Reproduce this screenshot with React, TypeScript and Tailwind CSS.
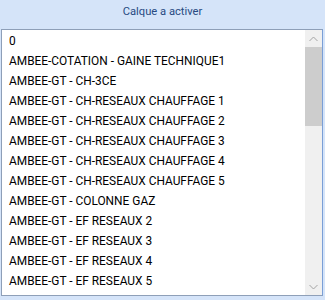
import React from "react";

const items = [
  "0",
  "AMBEE-COTATION - GAINE TECHNIQUE1",
  "AMBEE-GT - CH-3CE",
  "AMBEE-GT - CH-RESEAUX CHAUFFAGE 1",
  "AMBEE-GT - CH-RESEAUX CHAUFFAGE 2",
  "AMBEE-GT - CH-RESEAUX CHAUFFAGE 3",
  "AMBEE-GT - CH-RESEAUX CHAUFFAGE 4",
  "AMBEE-GT - CH-RESEAUX CHAUFFAGE 5",
  "AMBEE-GT - COLONNE GAZ",
  "AMBEE-GT - EF RESEAUX 2",
  "AMBEE-GT - EF RESEAUX 3",
  "AMBEE-GT - EF RESEAUX 4",
  "AMBEE-GT - EF RESEAUX 5",
];

export default function App() {
  return (
    <div
      className="w-[325px] h-[300px] bg-[#d5e4f9] flex flex-col overflow-hidden"
      style={{ fontFamily: 'Roboto, "Open Sans", sans-serif' }}
    >
      <div className="h-[29px] pb-[4px] flex items-center justify-center text-[11.2px] text-[#284a82]">
        Calque a activer
      </div>
      <div className="ml-[1px] mr-[2px] h-[267px] bg-white border border-[#8e9fb8] border-r-[#7b9fd6] flex">
        <div className="flex-1 pt-[2px] overflow-hidden">
          {items.map((t) => (
            <div key={t} className="h-[20px] pl-[7px] flex items-center text-[11.9px] text-black whitespace-nowrap">
              {t}
            </div>
          ))}
        </div>
        <div className="w-[17px] bg-[#f0f0f0] flex flex-col">
          <div className="h-[17px] flex items-center justify-center">
            <svg width="9" height="6" viewBox="0 0 9 6">
              <path d="M0.5 5 L4.5 1 L8.5 5" fill="none" stroke="#a3a3a3" strokeWidth="1" />
            </svg>
          </div>
          <div className="h-[79px] bg-[#cdcdcd]" />
          <div className="flex-1" />
          <div className="h-[17px] flex items-center justify-center">
            <svg width="9" height="6" viewBox="0 0 9 6">
              <path d="M0.5 1 L4.5 5 L8.5 1" fill="none" stroke="#a3a3a3" strokeWidth="1" />
            </svg>
          </div>
        </div>
      </div>
    </div>
  );
}
